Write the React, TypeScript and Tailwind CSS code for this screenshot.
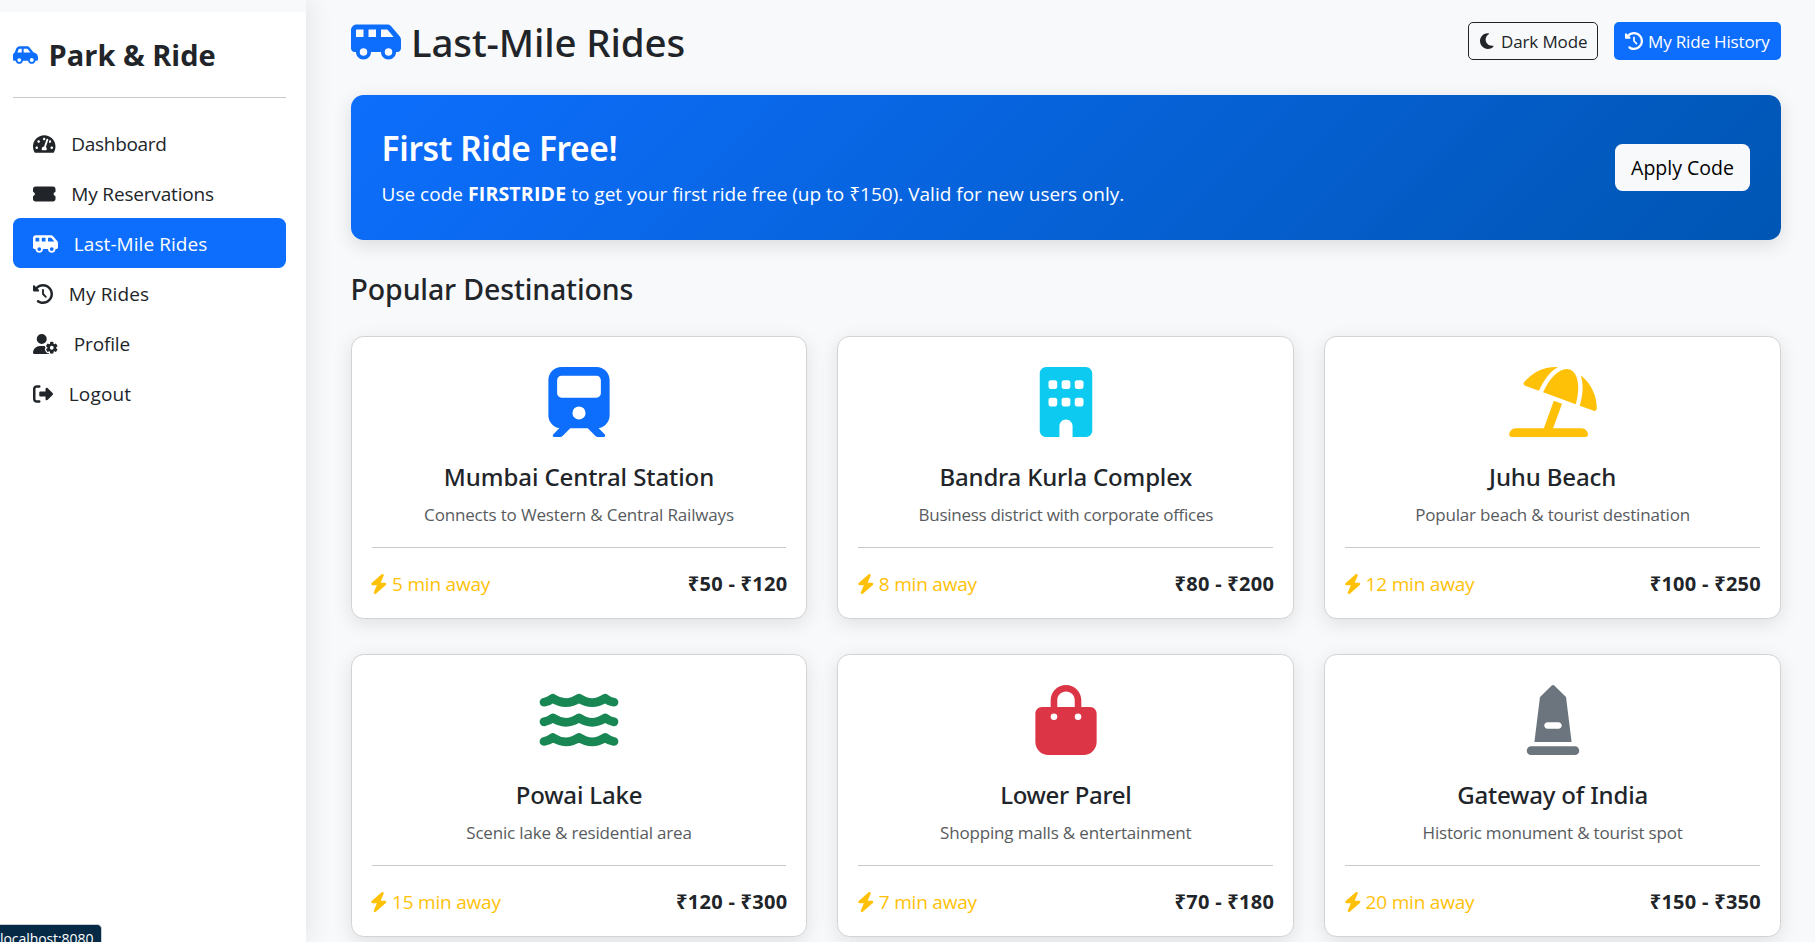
import type { ComponentType, ReactNode } from "react";
import { FaTachometerAlt } from "react-icons/fa";
import {
  FaBagShopping,
  FaBolt,
  FaBuilding,
  FaCarSide,
  FaClockRotateLeft,
  FaMonument,
  FaMoon,
  FaRightFromBracket,
  FaTicketSimple,
  FaTrain,
  FaUserGear,
  FaVanShuttle,
} from "react-icons/fa6";

type IconType = ComponentType<{ className?: string }>;

function UmbrellaBeach({ className }: { className?: string }) {
  return (
    <svg viewBox="0 0 640 512" fill="currentColor" className={className}>
      <path d="M115.4 136.9l102.1 37.18c35.19-81.54 86.21-144.3 139-173.7c-95.88-4.89-188.78 36.96-248.53 111.8C101.2 120.6 105.4 133.2 115.4 136.9zM247.6 185l238.5 86.87c35.75-121.4 18.62-231.6-42.63-253.9c-7.375-2.625-15.12-4.062-23.12-4.062C362.4 13.88 292.1 83.13 247.6 185zM521.5 60.51c6.25 16.25 10.75 34.62 13.13 55.25c5.75 49.87-1.376 108.1-18.88 166.9l102.6 37.37c10.13 3.75 21.25-3.375 21.5-14.12C642.3 210.1 598 118.4 521.5 60.51zM528 448h-207l65-178.5l-60.13-21.87l-72.88 200.4H48C21.49 448 0 469.5 0 496C0 504.8 7.163 512 16 512h544c8.837 0 16-7.163 16-16C576 469.5 554.5 448 528 448z" />
    </svg>
  );
}

function Waves({ className }: { className?: string }) {
  return (
    <svg
      viewBox="0 0 576 512"
      fill="none"
      stroke="currentColor"
      strokeWidth="64"
      strokeLinecap="round"
      strokeLinejoin="round"
      className={className}
    >
      {[0, 143.5, 287].map((y) => (
        <path
          key={y}
          transform={`translate(0 ${y})`}
          d="M32 126Q68 120 97 97Q144 129 192 129Q240 129 288 97Q336 129 384 129Q432 129 480 97Q508 120 544 126"
        />
      ))}
    </svg>
  );
}

type NavItem = { label: string; icon: IconType; width: string; tracking: string; active?: boolean };

const navItems: NavItem[] = [
  { label: "Dashboard", icon: FaTachometerAlt, width: "w-[22.5px]", tracking: "tracking-[-0.3px]" },
  { label: "My Reservations", icon: FaTicketSimple, width: "w-[22.5px]", tracking: "tracking-[-0.17px]" },
  { label: "Last-Mile Rides", icon: FaVanShuttle, width: "w-[25px]", tracking: "tracking-[0.07px]", active: true },
  { label: "My Rides", icon: FaClockRotateLeft, width: "w-5", tracking: "tracking-[0.12px]" },
  { label: "Profile", icon: FaUserGear, width: "w-[25px]", tracking: "tracking-[-0.15px]" },
  { label: "Logout", icon: FaRightFromBracket, width: "w-5", tracking: "tracking-[0.14px]" },
];

type Destination = {
  name: string;
  nameTracking: string;
  description: string;
  descriptionTracking: string;
  icon: IconType;
  color: string;
  eta: string;
  fare: string;
};

const destinations: Destination[] = [
  {
    name: "Mumbai Central Station",
    nameTracking: "tracking-[-0.08px]",
    description: "Connects to Western & Central Railways",
    descriptionTracking: "tracking-[-0.16px]",
    icon: FaTrain,
    color: "text-[#0d6efd]",
    eta: "5 min away",
    fare: "₹50 - ₹120",
  },
  {
    name: "Bandra Kurla Complex",
    nameTracking: "tracking-[-0.17px]",
    description: "Business district with corporate offices",
    descriptionTracking: "tracking-[-0.28px]",
    icon: FaBuilding,
    color: "text-[#0dcaf0]",
    eta: "8 min away",
    fare: "₹80 - ₹200",
  },
  {
    name: "Juhu Beach",
    nameTracking: "tracking-[-0.14px]",
    description: "Popular beach & tourist destination",
    descriptionTracking: "tracking-[-0.19px]",
    icon: UmbrellaBeach,
    color: "text-[#ffc107]",
    eta: "12 min away",
    fare: "₹100 - ₹250",
  },
  {
    name: "Powai Lake",
    nameTracking: "tracking-[-0.19px]",
    description: "Scenic lake & residential area",
    descriptionTracking: "tracking-[-0.18px]",
    icon: Waves,
    color: "text-[#198754]",
    eta: "15 min away",
    fare: "₹120 - ₹300",
  },
  {
    name: "Lower Parel",
    nameTracking: "tracking-[-0.33px]",
    description: "Shopping malls & entertainment",
    descriptionTracking: "tracking-[-0.18px]",
    icon: FaBagShopping,
    color: "text-[#dc3545]",
    eta: "7 min away",
    fare: "₹70 - ₹180",
  },
  {
    name: "Gateway of India",
    nameTracking: "tracking-[-0.19px]",
    description: "Historic monument & tourist spot",
    descriptionTracking: "tracking-[-0.19px]",
    icon: FaMonument,
    color: "text-[#6c757d]",
    eta: "20 min away",
    fare: "₹150 - ₹350",
  },
];

function Sidebar() {
  return (
    <aside className="relative z-10 flex w-[306px] shrink-0 flex-col bg-white shadow-[2px_0_25px_rgba(0,0,0,0.09)]">
      <div className="h-3 bg-[#f8f9fa]" />
      <div className="flex flex-col pr-5 pl-[13px]">
        <div className="flex h-[85px] items-center gap-[10.5px]">
          <FaCarSide className="h-5 w-[25px] text-[#0d6efd]" />
          <span className="text-[29px] leading-10 font-bold">Park &amp; Ride</span>
        </div>
        <hr className="border-[#c8c9ca]" />
        <nav className="mt-5 flex flex-col">
          {navItems.map(({ label, icon: Icon, width, tracking, active }) => (
            <a
              key={label}
              className={`flex h-[50px] items-center gap-[15.8px] rounded-[7.5px] pt-px pl-5 text-[19px] leading-[30px] whitespace-nowrap ${
                active ? "bg-[#0d6efd] text-white" : ""
              }`}
            >
              <Icon className={`h-5 ${width}`} />
              <span className={tracking}>{label}</span>
            </a>
          ))}
        </nav>
      </div>
    </aside>
  );
}

function SectionTitle({ children }: { children: ReactNode }) {
  return (
    <h3 className="mt-[31px] font-['Noto_Sans'] text-[28.5px] leading-9 font-medium tracking-[-0.14px]">
      {children}
    </h3>
  );
}

function DestinationCard({ item }: { item: Destination }) {
  const Icon = item.icon;
  return (
    <article className="flex h-[283px] flex-col rounded-[12.5px] border border-[#d3d3d4] bg-white px-5 pt-[30px] shadow-[0_5px_19px_rgba(0,0,0,0.1)]">
      <Icon className={`h-[70px] w-[88px] self-center ${item.color}`} />
      <h4
        className={`mt-[25px] text-center font-['Noto_Sans'] text-[24px] leading-[30px] font-medium ${item.nameTracking}`}
      >
        {item.name}
      </h4>
      <p className={`mt-[10px] text-center text-[17px] leading-[26px] text-[#585b5e] ${item.descriptionTracking}`}>
        {item.description}
      </p>
      <hr className="mt-[19px] border-[#c8c9ca]" />
      <div className="mt-[21px] flex items-center justify-between leading-[30px]">
        <span className="-ml-[1.6px] flex items-center gap-[4.5px] text-[19px] tracking-[-0.2px] text-[#ffc107]">
          <FaBolt className="h-5 w-[17.5px]" />
          {item.eta}
        </span>
        <strong className="-mr-px text-[20px] font-bold tracking-[0.27px]">{item.fare}</strong>
      </div>
    </article>
  );
}

export default function App() {
  return (
    <div className="relative flex h-screen overflow-hidden bg-[#f8f9fa] font-['Open_Sans','Noto_Sans',sans-serif] text-[#212529]">
      <Sidebar />
      <main className="min-w-0 flex-1 pr-[34px] pl-[44.6px]">
        <header className="flex items-center justify-between pt-[18px]">
          <h1 className="flex h-12 items-center gap-[10.4px] font-['Noto_Sans'] text-[38.5px] leading-[48px] font-medium tracking-[-0.13px]">
            <FaVanShuttle className="h-10 w-[50px] text-[#0d6efd]" />
            Last-Mile Rides
          </h1>
          <div className="mb-[2px] flex gap-4 text-[17px] leading-[26px]">
            <button className="flex h-[38px] w-[130px] items-center gap-[7.5px] rounded-[5px] border border-[#212529] pl-[11px] tracking-[-0.13px] whitespace-nowrap">
              <FaMoon className="h-[18px] w-[13.5px]" />
              <span className="pt-px">Dark Mode</span>
            </button>
            <button className="flex h-[38px] w-[167px] items-center gap-[5px] rounded-[5px] bg-[#0d6efd] pl-[11px] tracking-[-0.16px] whitespace-nowrap text-white">
              <FaClockRotateLeft className="size-[18px]" />
              <span className="pt-px">My Ride History</span>
            </button>
          </div>
        </header>

        <section className="mt-[29px] flex h-[145px] items-center justify-between rounded-[12.5px] bg-[linear-gradient(135deg,#0d6efd,#0056b3)] pr-[31px] pl-[31px] text-white shadow-[0_5px_19px_rgba(0,0,0,0.12)]">
          <div className="self-start pt-8">
            <h2 className="font-['Noto_Sans'] text-[33.5px] leading-[42px] font-semibold tracking-[-0.35px]">
              First Ride Free!
            </h2>
            <p className="mt-[10px] text-[19px] leading-[30px]">
              Use code <strong className="text-[19.5px] leading-[1] font-bold tracking-[0.18px]">FIRSTRIDE</strong> to get
              your first ride free (up to ₹150). Valid for new users only.
            </p>
          </div>
          <button className="h-[47px] w-[135px] rounded-[7.5px] bg-[#f8f9fa] text-[19.5px] leading-[30px] text-black">
            Apply Code
          </button>
        </section>

        <SectionTitle>Popular Destinations</SectionTitle>
        <div className="mt-[29px] grid grid-cols-3 gap-x-[30px] gap-y-[35px]">
          {destinations.map((item) => (
            <DestinationCard key={item.name} item={item} />
          ))}
        </div>
      </main>

      <div className="absolute bottom-0 left-0 z-20 h-[18px] w-[102px] overflow-hidden rounded-tr-[5px] border-t border-r border-[#c9cdd1] bg-[#062a46] pt-[4px] text-[14px] leading-[19px] tracking-[-0.07px] whitespace-nowrap text-white">
        localhost:8080
      </div>
    </div>
  );
}
